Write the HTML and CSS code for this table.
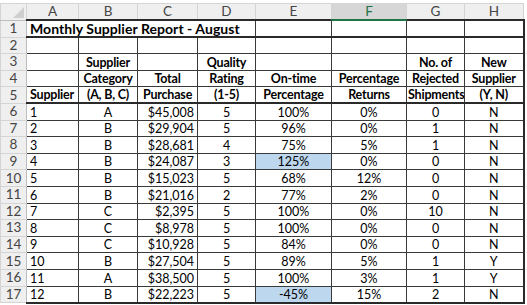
FILE: index.html
```html
<!DOCTYPE html>
<html>
<head>
<meta charset="utf-8">
<link rel="stylesheet" href="styles.css">
</head>
<body>
<div class="sheet">
<table class="grid">
<colgroup>
<col class="c-rh"><col class="c-a"><col class="c-b"><col class="c-c"><col class="c-d"><col class="c-e"><col class="c-f"><col class="c-g"><col class="c-h">
</colgroup>
<tr class="colhdr">
<th class="corner"><span class="tri"></span></th><th>A</th><th>B</th><th>C</th><th>D</th><th>E</th><th class="sel">F</th><th>G</th><th class="last">H</th>
</tr>
<tr class="r1"><th class="rh">1</th><td colspan="4" class="title">Monthly Supplier Report - August</td><td></td><td></td><td></td><td class="re"></td></tr>
<tr><th class="rh">2</th><td></td><td></td><td></td><td></td><td></td><td></td><td></td><td class="re"></td></tr>
<tr class="hd"><th class="rh">3</th><td></td><td>Supplier</td><td></td><td>Quality</td><td></td><td></td><td>No. of</td><td class="re">New</td></tr>
<tr class="hd"><th class="rh">4</th><td></td><td>Category</td><td>Total</td><td>Rating</td><td>On-time</td><td>Percentage</td><td>Rejected</td><td class="re">Supplier</td></tr>
<tr class="hd r5"><th class="rh">5</th><td class="l">Supplier</td><td>(A, B, C)</td><td>Purchase</td><td>(1-5)</td><td>Percentage</td><td>Returns</td><td>Shipments</td><td class="re">(Y, N)</td></tr>
<tr class="d"><th class="rh">6</th><td class="l">1</td><td>A</td><td class="r">$45,008</td><td>5</td><td>100%</td><td>0%</td><td>0</td><td class="re">N</td></tr>
<tr class="d"><th class="rh">7</th><td class="l">2</td><td>B</td><td class="r">$29,904</td><td>5</td><td>96%</td><td>0%</td><td>1</td><td class="re">N</td></tr>
<tr class="d"><th class="rh">8</th><td class="l">3</td><td>B</td><td class="r">$28,681</td><td>4</td><td>75%</td><td>5%</td><td>1</td><td class="re">N</td></tr>
<tr class="d"><th class="rh">9</th><td class="l">4</td><td>B</td><td class="r">$24,087</td><td>3</td><td class="hl">125%</td><td>0%</td><td>0</td><td class="re">N</td></tr>
<tr class="d"><th class="rh">10</th><td class="l">5</td><td>B</td><td class="r">$15,023</td><td>5</td><td>68%</td><td>12%</td><td>0</td><td class="re">N</td></tr>
<tr class="d"><th class="rh">11</th><td class="l">6</td><td>B</td><td class="r">$21,016</td><td>2</td><td>77%</td><td>2%</td><td>0</td><td class="re">N</td></tr>
<tr class="d"><th class="rh">12</th><td class="l">7</td><td>C</td><td class="r">$2,395</td><td>5</td><td>100%</td><td>0%</td><td>10</td><td class="re">N</td></tr>
<tr class="d"><th class="rh">13</th><td class="l">8</td><td>C</td><td class="r">$8,978</td><td>5</td><td>100%</td><td>0%</td><td>0</td><td class="re">N</td></tr>
<tr class="d"><th class="rh">14</th><td class="l">9</td><td>C</td><td class="r">$10,928</td><td>5</td><td>84%</td><td>0%</td><td>0</td><td class="re">N</td></tr>
<tr class="d"><th class="rh">15</th><td class="l">10</td><td>B</td><td class="r">$27,504</td><td>5</td><td>89%</td><td>5%</td><td>1</td><td class="re">Y</td></tr>
<tr class="d"><th class="rh">16</th><td class="l">11</td><td>A</td><td class="r">$38,500</td><td>5</td><td>100%</td><td>3%</td><td>1</td><td class="re">Y</td></tr>
<tr class="d last-row"><th class="rh">17</th><td class="l">12</td><td>B</td><td class="r">$22,223</td><td>5</td><td class="hl">-45%</td><td>15%</td><td>2</td><td class="re">N</td></tr>
</table>
</div>
</body>
</html>
```
FILE: styles.css
```css
html, body {
  margin: 0;
  padding: 0;
  background: #ffffff;
}
.sheet {
  padding-top: 3px;
  font-family: Lato, "Open Sans", sans-serif;
  font-size: 12.5px;
  color: #000;
}
.grid {
  border-collapse: collapse;
  table-layout: fixed;
  width: 524px;
}
.c-rh { width: 26px; }
.c-a { width: 52px; }
.c-b { width: 59px; }
.c-c { width: 60px; }
.c-d { width: 58px; }
.c-e { width: 76px; }
.c-f { width: 75px; }
.c-g { width: 58px; }
.c-h { width: 59px; }

.grid tr { height: 16.6px; }
.grid td {
  border: 1px solid #3a3a3a;
  padding: 0 3px;
  text-align: center;
  vertical-align: bottom;
  white-space: nowrap;
  overflow: hidden;
  line-height: 15px;
}
.colhdr { height: 17px; }
.colhdr th {
  background: #efefef;
  color: #454545;
  font-weight: normal;
  font-size: 13.5px;
  border: 1px solid #d4d4d4;
  border-bottom: 1px solid #bdbdbd;
  line-height: 15px;
  padding: 0;
}
.colhdr th.sel {
  background: #d6d6d6;
  color: #217346;
  border-bottom: 2px solid #217346;
}
.colhdr th.corner {
  position: relative;
  background: #efefef;
}
.tri {
  position: absolute;
  right: 2px;
  bottom: 2px;
  width: 0;
  height: 0;
  border-left: 11px solid transparent;
  border-bottom: 11px solid #cfcfcf;
}
th.rh {
  background: #efefef;
  color: #454545;
  font-weight: normal;
  font-size: 13.5px;
  border: 1px solid #d4d4d4;
  border-right: 1px solid #bdbdbd;
  padding: 0;
  text-align: center;
  line-height: 15px;
}
td.title {
  text-align: left;
  font-weight: bold;
  font-size: 14px;
  letter-spacing: 0.05px;
}
.r1 td { border-bottom: 2px solid #2a2a2a; border-top: 2px solid #2a2a2a; }
.hd td {
  font-weight: bold;
  padding: 0 1px;
  letter-spacing: -0.2px;
}
.hd td.l { padding-left: 3px; }
.r5 td { border-bottom: 2px solid #2a2a2a; }
td.l { text-align: left; }
td.r { text-align: right; }
td.re { border-right: 2px solid #2a2a2a; }
.last-row td { border-bottom: 2px solid #2a2a2a; }
td.hl { background: #bdd7ee; }
```
